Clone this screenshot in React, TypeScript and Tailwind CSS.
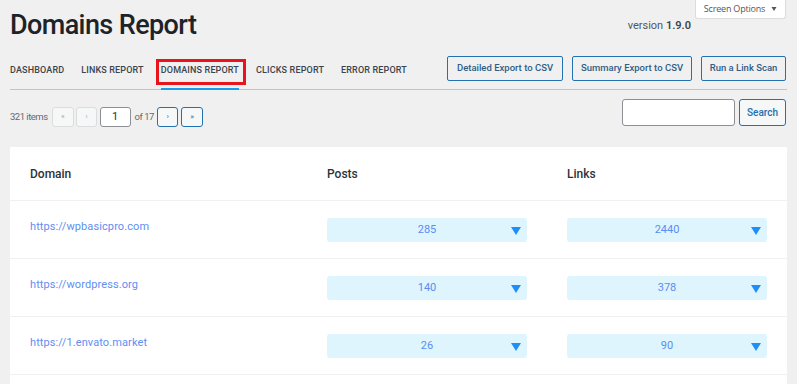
const tabs = ['Dashboard', 'Links Report', 'Domains Report', 'Clicks Report', 'Error Report'];

const actions = [
  { label: 'Detailed Export to CSV', w: 'w-[116px]' },
  { label: 'Summary Export to CSV', w: 'w-[120px]' },
  { label: 'Run a Link Scan', w: 'w-[85px]' },
];

const rows = [
  { domain: 'https://wpbasicpro.com', posts: 285, links: 2440 },
  { domain: 'https://wordpress.org', posts: 140, links: 378 },
  { domain: 'https://1.envato.market', posts: 26, links: 90 },
];

function Caret({ className }: { className?: string }) {
  return (
    <svg viewBox="0 0 10 8" className={className} fill="currentColor">
      <path d="M0 0h10L5 8z" />
    </svg>
  );
}

function CountSelect({ value }: { value: number }) {
  return (
    <div className="relative flex h-[24px] w-[200px] items-center justify-center rounded-[3px] bg-[#dff5fd] text-[11px] text-[#5b8cf2]">
      <span className="pt-[2px]">{value}</span>
      <Caret className="absolute right-[6px] top-[9px] h-[8px] w-[10px] text-[#1f8dfa]" />
    </div>
  );
}

export default function App() {
  return (
    <div className="h-screen overflow-hidden bg-[#f0f0f1] px-[10px] font-['Roboto',sans-serif] text-[#2c3338]">
      {/* header */}
      <div className="flex items-start">
        <h1 className="mt-[9px] text-[27px] font-medium leading-[32px] tracking-[-0.6px] text-[#1d2327]">
          Domains Report
        </h1>
        <div className="flex-1" />
        <div className="mt-[19px] text-[11px] leading-[14px] text-[#50575e]">
          version <span className="font-semibold text-[#3c434a]">1.9.0</span>
        </div>
        <button className="ml-[4px] mr-px flex h-[19px] w-[91px] items-center justify-center gap-[6px] whitespace-nowrap rounded-b-[3px] border border-t-0 border-[#dcdcde] bg-white font-['Open_Sans',sans-serif] text-[9px] tracking-[-0.2px] text-[#50575e]">
          Screen Options
          <Caret className="h-[4px] w-[6px] text-[#50575e]" />
        </button>
      </div>

      {/* nav */}
      <div className="mt-[15px] flex h-[34px] items-start justify-between border-b border-[#c3c4c7]">
        <div className="flex gap-[17px]">
          {tabs.map((t) => {
            const active = t === 'Domains Report';
            return (
              <a
                key={t}
                className={`relative -mb-px flex h-[34px] items-center whitespace-nowrap border-b-2 pb-[3px] text-[9px] font-medium uppercase tracking-[0.15px] text-[#3c434a] ${
                  active ? 'border-[#1a9bf0]' : 'border-transparent'
                }`}
              >
                {t}
                {active && (
                  <span className="absolute -left-[5px] -right-[7px] top-[3px] bottom-[3px] border-[3px] border-[#e8131b]" />
                )}
              </a>
            );
          })}
        </div>
        <div className="flex gap-[9px] pr-px">
          {actions.map((b) => (
            <button
              key={b.label}
              className={`h-[25px] ${b.w} whitespace-nowrap rounded-[2px] border border-[#2271b1] text-[9.5px] font-medium text-[#2f5d86]`}
            >
              {b.label}
            </button>
          ))}
        </div>
      </div>

      {/* pagination + search */}
      <div className="mt-[9px] flex items-start justify-between">
        <div className="mt-[8px] flex h-[20px] items-center whitespace-nowrap text-[9.5px] tracking-[-0.5px] text-[#646970]">
          <span className="mr-[4px]">321 items</span>
          <span className="flex h-[20px] w-[22px] items-center justify-center rounded-[3px] border border-[#dcdcde] bg-[#f6f7f7] text-[8px] text-[#a7aaad]">
            «
          </span>
          <span className="ml-[2px] flex h-[20px] w-[21px] items-center justify-center rounded-[3px] border border-[#dcdcde] bg-[#f6f7f7] text-[8px] text-[#a7aaad]">
            ‹
          </span>
          <span className="ml-[3px] flex h-[20px] w-[31px] items-center justify-center rounded-[3px] border border-[#8c8f94] bg-white text-[11px] tracking-normal text-[#2c3338]">
            1
          </span>
          <span className="ml-[4px] mr-[3px]">of 17</span>
          <span className="flex h-[20px] w-[21px] items-center justify-center rounded-[3px] border border-[#2271b1] bg-[#f6f7f7] text-[8px] text-[#2271b1]">
            ›
          </span>
          <span className="ml-[3px] flex h-[20px] w-[22px] items-center justify-center rounded-[3px] border border-[#2271b1] bg-[#f6f7f7] text-[8px] text-[#2271b1]">
            »
          </span>
        </div>
        <div className="flex gap-[4px] pr-px">
          <input className="h-[27px] w-[113px] rounded-[3px] border border-[#8c8f94] bg-white" />
          <button className="h-[27px] w-[47px] rounded-[3px] border border-[#2271b1] bg-[#f6f7f7] text-[10px] font-medium text-[#2271b1]">
            Search
          </button>
        </div>
      </div>

      {/* table */}
      <div className="mt-[20px] h-[300px] bg-white">
        <div className="grid h-[53px] grid-cols-[297px_240px_1fr] items-center pl-[20px] pt-[1px] text-[12px] font-medium text-[#2c3338]">
          <div>Domain</div>
          <div>Posts</div>
          <div>Links</div>
        </div>
        {rows.map((r) => (
          <div
            key={r.domain}
            className="grid h-[58px] grid-cols-[297px_240px_1fr] items-center border-t border-[#f0f0f1] pl-[20px] last:h-[59px] last:border-b"
          >
            <a className="mb-[5px] text-[11px] tracking-[0.1px] text-[#5f8ef2]">{r.domain}</a>
            <CountSelect value={r.posts} />
            <CountSelect value={r.links} />
          </div>
        ))}
      </div>
    </div>
  );
}
